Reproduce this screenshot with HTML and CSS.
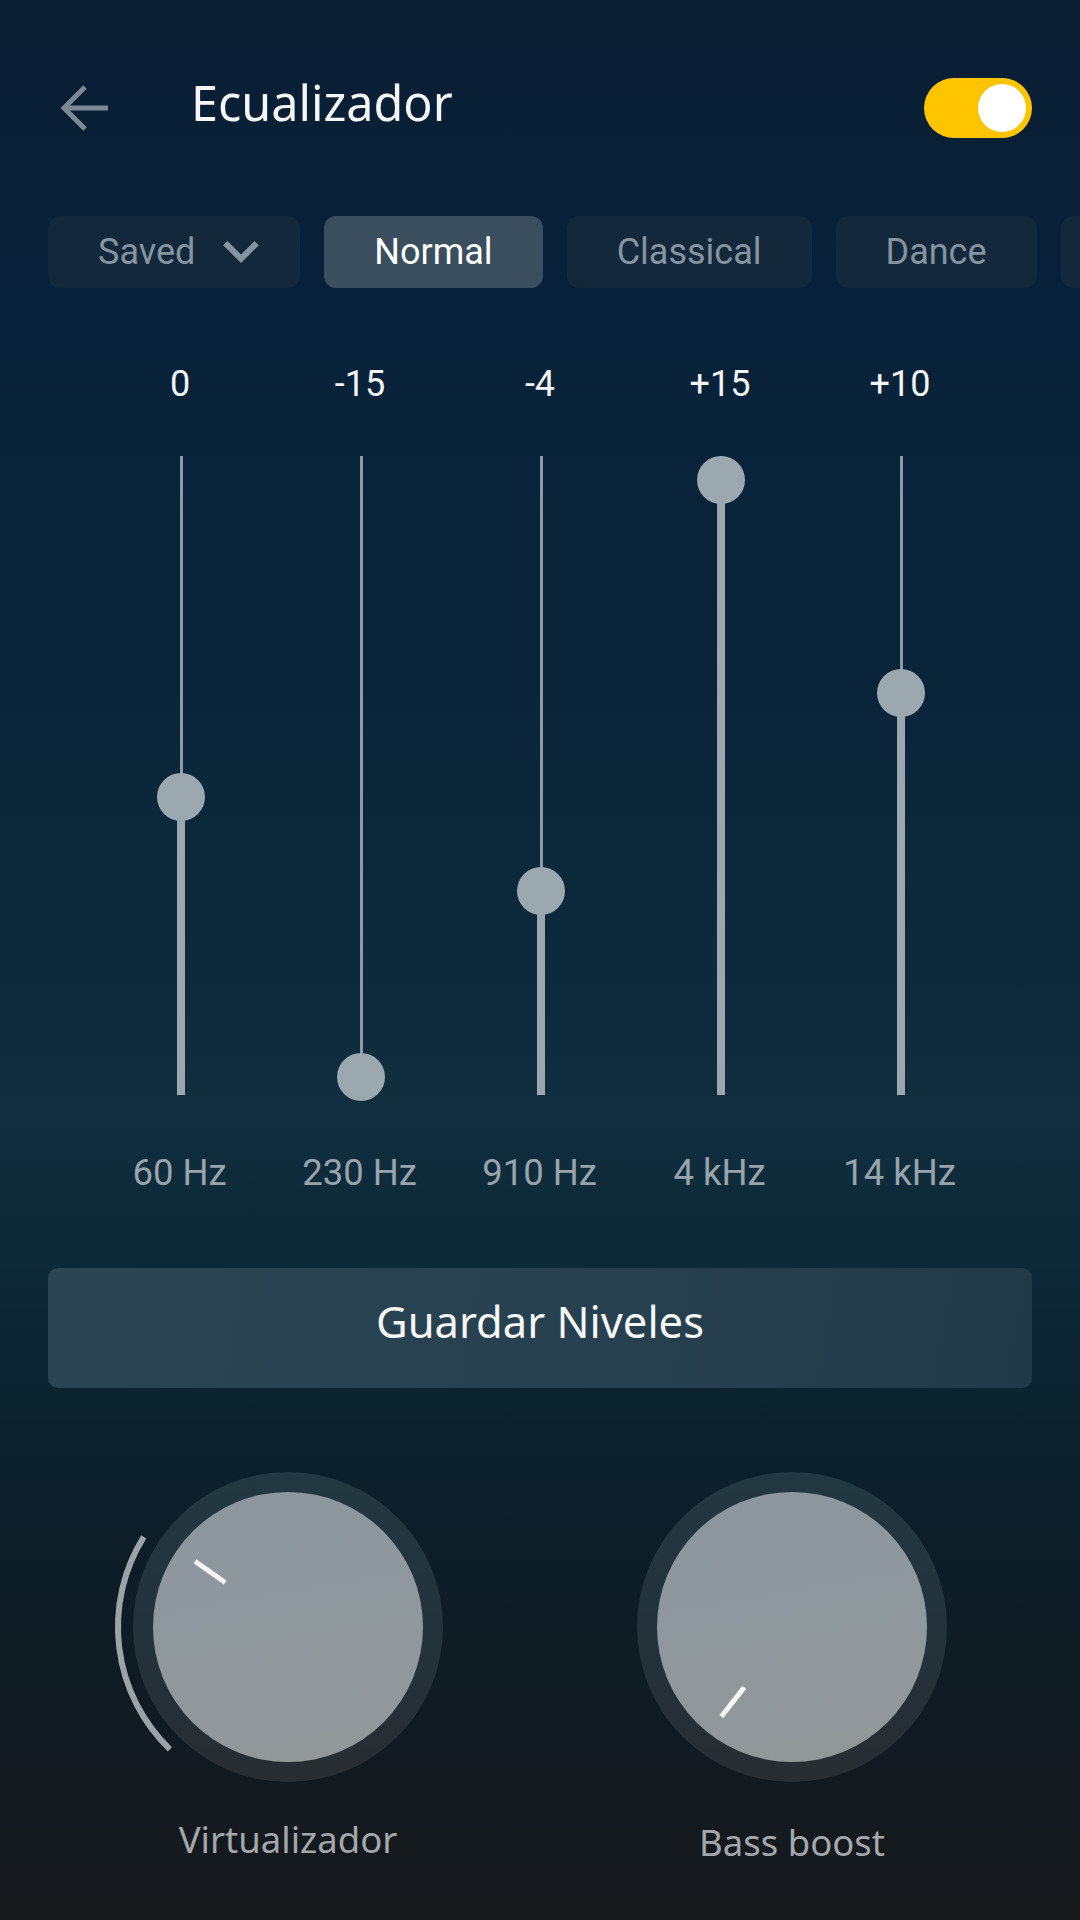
FILE: index.html
```html
<!DOCTYPE html>
<html lang="es">
<head>
  <meta charset="UTF-8">
  <title>Ecualizador</title>
  <link rel="stylesheet" href="styles.css">
</head>
<body>
  <div class="screen">
    <header class="top-bar">
      <button class="back-button" aria-label="Volver">
        <svg width="48" height="48" viewBox="0 0 48 48">
          <path d="M48 24H4 M25 3L4 24l21 21" fill="none" stroke="currentColor" stroke-width="5"/>
        </svg>
      </button>
      <h1 class="title">Ecualizador</h1>
      <div class="toggle"><span class="toggle-thumb"></span></div>
    </header>

    <div class="presets">
      <div class="preset preset-saved">
        Saved
        <svg width="36" height="22" viewBox="6 8.59 12 7.41">
          <path d="M16.59 8.59L12 13.17 7.41 8.59 6 10l6 6 6-6z" fill="currentColor"/>
        </svg>
      </div>
      <div class="preset active">Normal</div>
      <div class="preset">Classical</div>
      <div class="preset">Dance</div>
      <div class="preset preset-more"></div>
    </div>

    <div class="bands">
      <div class="band">
        <span class="band-value">0</span>
        <div class="band-track">
          <span class="band-fill" style="height: 298px"></span>
          <span class="band-thumb" style="top: 317px"></span>
        </div>
        <span class="band-freq">60 Hz</span>
      </div>
      <div class="band">
        <span class="band-value">-15</span>
        <div class="band-track">
          <span class="band-fill" style="height: 18px"></span>
          <span class="band-thumb" style="top: 597px"></span>
        </div>
        <span class="band-freq">230 Hz</span>
      </div>
      <div class="band">
        <span class="band-value">-4</span>
        <div class="band-track">
          <span class="band-fill" style="height: 204px"></span>
          <span class="band-thumb" style="top: 411px"></span>
        </div>
        <span class="band-freq">910 Hz</span>
      </div>
      <div class="band">
        <span class="band-value">+15</span>
        <div class="band-track">
          <span class="band-fill" style="height: 615px"></span>
          <span class="band-thumb" style="top: 0px"></span>
        </div>
        <span class="band-freq">4 kHz</span>
      </div>
      <div class="band">
        <span class="band-value">+10</span>
        <div class="band-track">
          <span class="band-fill" style="height: 402px"></span>
          <span class="band-thumb" style="top: 213px"></span>
        </div>
        <span class="band-freq">14 kHz</span>
      </div>
    </div>

    <button class="save-button">Guardar Niveles</button>

    <div class="knobs">
      <div class="knob-item">
        <div class="knob">
          <svg class="knob-arc" width="370" height="370" viewBox="0 0 370 370">
            <path d="M66.9 307.3 A170 170 0 0 1 40.8 94.9" fill="none" stroke="#9aa3a8" stroke-width="6"/>
          </svg>
          <div class="knob-face">
            <div class="knob-pointer" style="transform: rotate(-55deg)"><span></span></div>
          </div>
        </div>
        <span class="knob-label">Virtualizador</span>
      </div>
      <div class="knob-item">
        <div class="knob">
          <div class="knob-face">
            <div class="knob-pointer" style="transform: rotate(-142deg)"><span></span></div>
          </div>
        </div>
        <span class="knob-label knob-label-low">Bass boost</span>
      </div>
    </div>
  </div>
</body>
</html>
```

FILE: styles.css
```css
* {
  box-sizing: border-box;
}

body {
  margin: 0;
  padding: 0;
  width: 1080px;
  height: 1920px;
  overflow: hidden;
  font-family: 'Noto Sans', 'Open Sans', sans-serif;
  color: #f3f5f6;
  background: linear-gradient(180deg,
    #0a1e33 0%,
    #08213a 16%,
    #0a2539 36%,
    #0d2a3c 50%,
    #102e3e 58%,
    #0e2a39 64%,
    #0b212e 74%,
    #0e1b23 86%,
    #17191c 100%);
}

.screen {
  display: flex;
  flex-direction: column;
  height: 100%;
}

/* header */

.top-bar {
  display: flex;
  align-items: center;
  height: 216px;
  padding: 0 48px 0 60px;
}

.back-button {
  display: flex;
  padding: 0;
  border: none;
  background: none;
  color: #7c8994;
}

.title {
  flex: 1;
  margin: 0 0 13px 83px;
  font-size: 48.5px;
  font-weight: 400;
  line-height: 64px;
  color: #f4f6f7;
}

.toggle {
  display: flex;
  justify-content: flex-end;
  align-items: center;
  width: 108px;
  height: 60px;
  padding: 6px;
  border-radius: 30px;
  background-color: #ffc400;
}

.toggle-thumb {
  width: 48px;
  height: 48px;
  border-radius: 50%;
  background-color: #ffffff;
}

/* presets */

.presets {
  display: flex;
  gap: 24px;
  padding-left: 48px;
  overflow: hidden;
  white-space: nowrap;
}

.preset {
  flex-shrink: 0;
  display: flex;
  align-items: center;
  height: 72px;
  padding: 0 50px;
  border-radius: 12px;
  background-color: #14283b;
  color: #8494a0;
  font-family: Roboto, sans-serif;
  font-size: 36px;
  line-height: 44px;
}

.preset svg {
  margin-left: 28px;
}

.preset-saved {
  padding-right: 41px;
}

.preset-more {
  width: 200px;
}

.preset.active {
  background-color: #3a4e5e;
  color: #ffffff;
}

/* bands */

.bands {
  display: grid;
  grid-template-columns: repeat(5, 180px);
  margin: 74px 0 0 91px;
}

.band {
  display: flex;
  flex-direction: column;
  align-items: center;
  font-family: Roboto, sans-serif;
  font-size: 36px;
  line-height: 44px;
}

.band-value {
  margin-right: 2px;
  color: #f2f4f5;
}

.band-track {
  position: relative;
  display: flex;
  flex-direction: column;
  justify-content: flex-end;
  align-items: center;
  width: 48px;
  height: 639px;
  margin-top: 50px;
  background: linear-gradient(#8e9ba4, #8e9ba4) center / 3px 100% no-repeat;
}

.band-fill {
  width: 8px;
  background-color: #9aa7af;
}

.band-thumb {
  position: absolute;
  left: 0;
  width: 48px;
  height: 48px;
  border-radius: 50%;
  background-color: #9ba8b0;
}

.band-freq {
  margin: 56px 3px 0 0;
  font-size: 36.5px;
  color: #98a4ac;
}

/* save */

.save-button {
  display: flex;
  justify-content: center;
  align-items: center;
  height: 120px;
  margin: 73px 48px 0;
  padding: 0 0 14px;
  border: none;
  border-radius: 10px;
  background: linear-gradient(100deg, #2c4553 0%, #284150 50%, #223a48 100%);
  color: #f5f7f8;
  font-family: 'Noto Sans', 'Open Sans', sans-serif;
  font-size: 43.5px;
  line-height: 56px;
}

/* knobs */

.knobs {
  display: grid;
  grid-template-columns: 1fr 1fr;
  padding: 0 36px;
  margin-top: 84px;
}

.knob-item {
  display: flex;
  flex-direction: column;
  align-items: center;
}

.knob {
  position: relative;
  width: 310px;
  height: 310px;
  padding: 20px;
  border-radius: 50%;
  background: linear-gradient(180deg, #233842 0%, #24323a 55%, #282d31 100%);
}

.knob-arc {
  position: absolute;
  left: -30px;
  top: -30px;
}

.knob-face {
  width: 270px;
  height: 270px;
  border-radius: 50%;
  background: linear-gradient(170deg, #8b969e 0%, #8f989d 50%, #939799 100%);
}

.knob-pointer {
  display: flex;
  justify-content: center;
  width: 100%;
  height: 100%;
  padding-top: 21px;
}

.knob-pointer span {
  width: 5px;
  height: 37px;
  background-color: #f7f7f7;
}

.knob-label {
  margin-top: 33px;
  font-size: 36.5px;
  line-height: 48px;
  color: #a3a8ac;
}

.knob-label-low {
  margin-top: 36px;
}
```
